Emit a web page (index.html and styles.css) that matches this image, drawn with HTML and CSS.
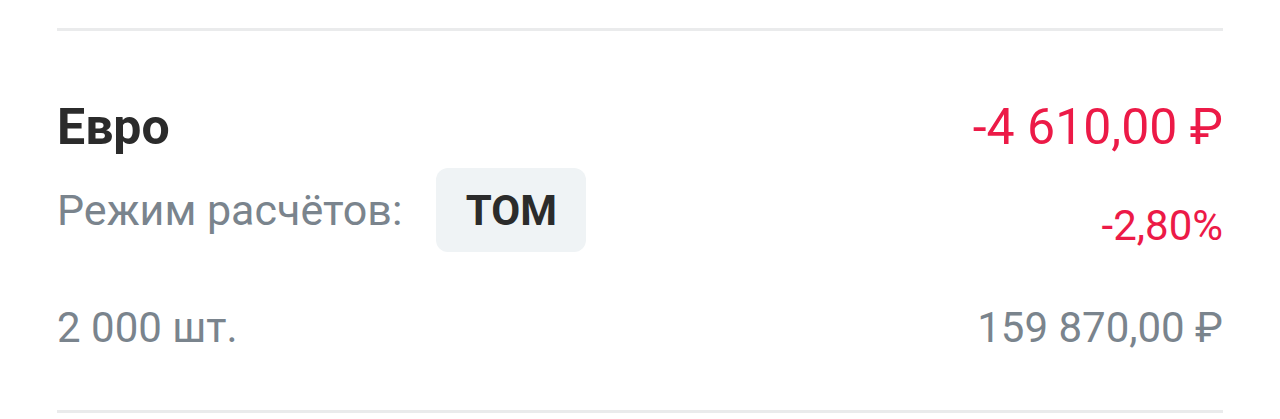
FILE: index.html
```html
<!DOCTYPE html>
<html lang="ru">
<head>
<meta charset="utf-8">
<title>Евро</title>
<link rel="stylesheet" href="styles.css">
</head>
<body>
<div class="item">
  <div class="divider"></div>
  <div class="content">
    <div class="row row-title">
      <span class="name">Евро</span>
      <span class="amount negative">-4 610,00 ₽</span>
    </div>
    <div class="row row-mode">
      <div class="mode">
        <span class="label">Режим расчётов:</span>
        <span class="badge">TOM</span>
      </div>
      <span class="percent negative">-2,80%</span>
    </div>
    <div class="row row-qty">
      <span class="muted">2 000 шт.</span>
      <span class="muted">159 870,00 ₽</span>
    </div>
  </div>
  <div class="divider"></div>
</div>
</body>
</html>
```
FILE: styles.css
```css
html, body {
  margin: 0;
  padding: 0;
  background: #ffffff;
}
body {
  font-family: Roboto, "Noto Sans", sans-serif;
}
.item {
  padding: 28px 57px 0;
}
.divider {
  height: 3px;
  background: #eaebec;
}
.content {
  padding: 68px 0 58px;
}
.row {
  display: flex;
  justify-content: space-between;
}
.row-title {
  align-items: baseline;
  font-size: 50px;
  line-height: 57px;
}
.name {
  font-weight: 700;
  color: #2b2b2b;
}
.negative {
  color: #ec1a47;
}
.row-mode {
  margin-top: 12px;
  align-items: flex-end;
}
.mode {
  display: flex;
  align-items: center;
  gap: 34px;
}
.label {
  font-size: 43px;
  line-height: 49px;
  color: #7a848d;
}
.badge {
  display: flex;
  align-items: center;
  justify-content: center;
  width: 150px;
  height: 84px;
  border-radius: 12px;
  background: #eff3f5;
  color: #2b2b2b;
  font-size: 42px;
  font-weight: 700;
}
.percent {
  font-size: 42px;
  line-height: 52px;
}
.row-qty {
  margin-top: 51px;
  font-size: 42px;
  line-height: 49px;
}
.muted {
  color: #7a848d;
}
```
